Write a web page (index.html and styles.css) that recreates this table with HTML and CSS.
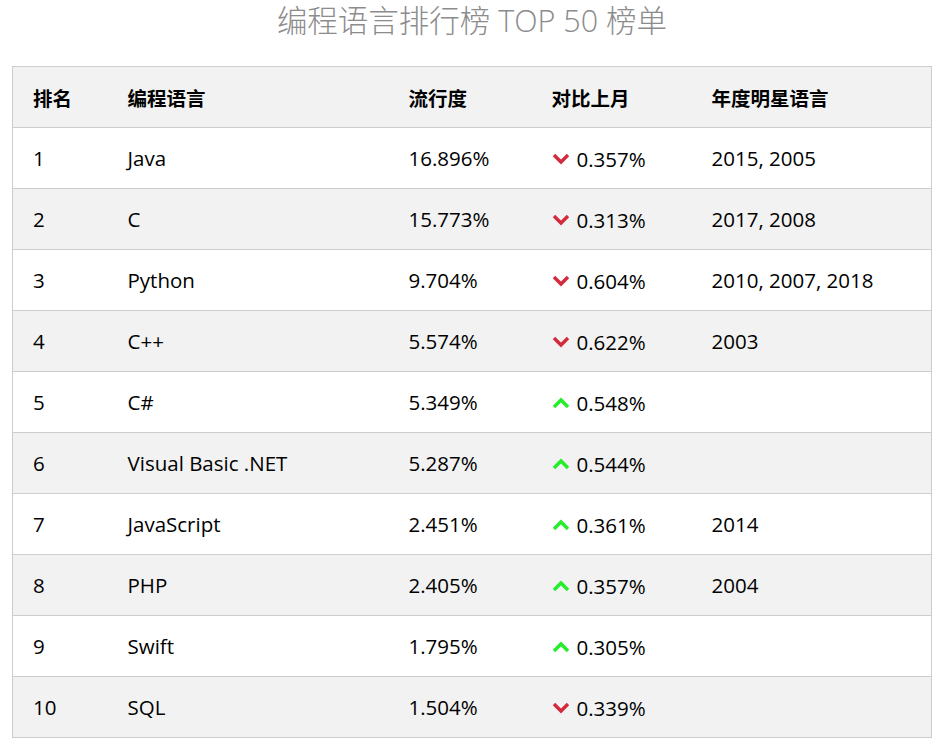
FILE: index.html
```html
<!DOCTYPE html>
<html lang="zh-CN">
<head>
<meta charset="utf-8">
<title>编程语言排行榜 TOP 50 榜单</title>
<link rel="stylesheet" href="styles.css">
</head>
<body>
<h1 class="title">编程语言排行榜 TOP 50 榜单</h1>
<table class="rank">
  <colgroup>
    <col class="c1"><col class="c2"><col class="c3"><col class="c4"><col class="c5">
  </colgroup>
  <thead>
    <tr><th>排名</th><th>编程语言</th><th>流行度</th><th>对比上月</th><th>年度明星语言</th></tr>
  </thead>
  <tbody>
    <tr><td>1</td><td>Java</td><td>16.896%</td><td><span class="chg"><svg class="ico down" viewBox="0 0 18 12"><path d="M2 2 L9 9 L16 2"/></svg>0.357%</span></td><td>2015, 2005</td></tr>
    <tr><td>2</td><td>C</td><td>15.773%</td><td><span class="chg"><svg class="ico down" viewBox="0 0 18 12"><path d="M2 2 L9 9 L16 2"/></svg>0.313%</span></td><td>2017, 2008</td></tr>
    <tr><td>3</td><td>Python</td><td>9.704%</td><td><span class="chg"><svg class="ico down" viewBox="0 0 18 12"><path d="M2 2 L9 9 L16 2"/></svg>0.604%</span></td><td>2010, 2007, 2018</td></tr>
    <tr><td>4</td><td>C++</td><td>5.574%</td><td><span class="chg"><svg class="ico down" viewBox="0 0 18 12"><path d="M2 2 L9 9 L16 2"/></svg>0.622%</span></td><td>2003</td></tr>
    <tr><td>5</td><td>C#</td><td>5.349%</td><td><span class="chg"><svg class="ico up" viewBox="0 0 18 12"><path d="M2 10 L9 3 L16 10"/></svg>0.548%</span></td><td></td></tr>
    <tr><td>6</td><td>Visual Basic .NET</td><td>5.287%</td><td><span class="chg"><svg class="ico up" viewBox="0 0 18 12"><path d="M2 10 L9 3 L16 10"/></svg>0.544%</span></td><td></td></tr>
    <tr><td>7</td><td>JavaScript</td><td>2.451%</td><td><span class="chg"><svg class="ico up" viewBox="0 0 18 12"><path d="M2 10 L9 3 L16 10"/></svg>0.361%</span></td><td>2014</td></tr>
    <tr><td>8</td><td>PHP</td><td>2.405%</td><td><span class="chg"><svg class="ico up" viewBox="0 0 18 12"><path d="M2 10 L9 3 L16 10"/></svg>0.357%</span></td><td>2004</td></tr>
    <tr><td>9</td><td>Swift</td><td>1.795%</td><td><span class="chg"><svg class="ico up" viewBox="0 0 18 12"><path d="M2 10 L9 3 L16 10"/></svg>0.305%</span></td><td></td></tr>
    <tr><td>10</td><td>SQL</td><td>1.504%</td><td><span class="chg"><svg class="ico down" viewBox="0 0 18 12"><path d="M2 2 L9 9 L16 2"/></svg>0.339%</span></td><td></td></tr>
  </tbody>
</table>
</body>
</html>
```

FILE: styles.css
```css
body {
  margin: 0;
  padding: 0 0 0 12px;
  font-family: "Open Sans", "Noto Sans CJK SC", sans-serif;
  color: #000;
  background: #fff;
}
.title {
  margin: 0;
  width: 920px;
  height: 44px;
  line-height: 40px;
  text-align: center;
  font-size: 30.5px;
  font-weight: 300;
  color: #8c8c8c;
  font-family: "Open Sans", "Noto Sans CJK SC", sans-serif;
}
.rank {
  margin-top: 22px;
  width: 920px;
  border-collapse: collapse;
  border: 1px solid #ccc;
  font-size: 20.5px;
  table-layout: fixed;
}
.c1 { width: 95px; }
.c2 { width: 281px; }
.c3 { width: 143px; }
.c4 { width: 160px; }
.c5 { width: auto; }
.rank th, .rank td {
  height: 60px;
  padding: 0 0 0 20px;
  text-align: left;
  border-bottom: 1px solid #ccc;
  white-space: nowrap;
}
.rank th {
  font-family: "Noto Sans CJK SC", sans-serif;
  font-size: 19.5px;
  font-weight: 700;
  background: #f2f2f2;
}
.rank tbody tr:nth-child(even) td {
  background: #f2f2f2;
}
.chg {
  display: inline-flex;
  align-items: center;
  gap: 7px;
}
.ico {
  width: 18px;
  height: 12px;
  fill: none;
  stroke-width: 3.4;
  stroke-linecap: butt;
  stroke-linejoin: miter;
}
.down { stroke: #d42a3c; }
.up { stroke: #22ee2a; }
```
